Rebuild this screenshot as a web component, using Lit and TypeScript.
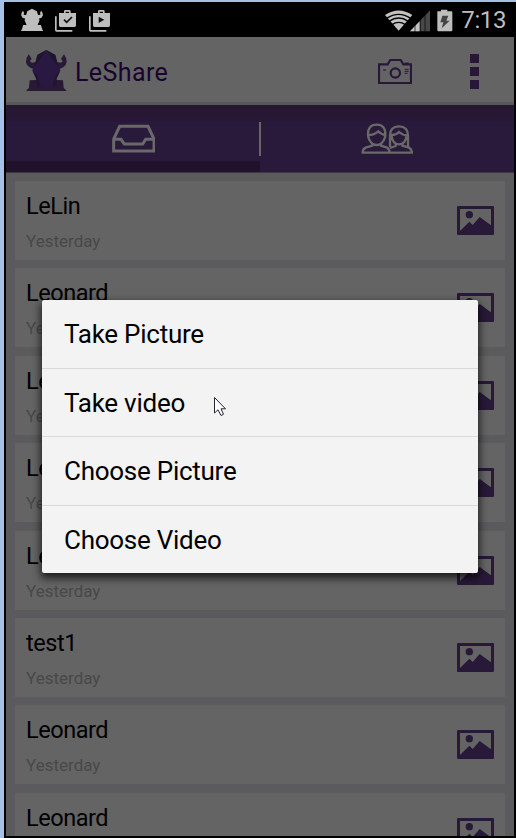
import { LitElement, html, svg, css } from "lit";
import { customElement } from "lit/decorators.js";

const frogSilhouette = svg`<path d="M51 0 L74 12 L79 29 Q91 32 91 25 L88 20 L94 10 Q103 20 102 32 Q98 44 84 46 L86 55 L77 76 L93 76 L98 93 L103 104 L0 104 L5 93 L10 76 L26 76 L17 55 L19 46 Q4 44 1 32 Q0 20 9 10 L15 20 L12 25 Q12 32 24 29 L29 12 Z"/>`;

@customElement("app-root")
export class AppRoot extends LitElement {
  private entries = ["LeLin", "Leonard", "Leonard", "Leonard", "Leonard", "test1", "Leonard", "Leonard"];
  private choices = ["Take Picture", "Take video", "Choose Picture", "Choose Video"];

  static styles = css`
    :host { display: block; width: 516px; height: 838px; overflow: hidden; position: relative; font-family: Roboto, "Noto Sans", sans-serif; background: #000; color: #000; }
    * { box-sizing: border-box; }
    svg { display: block; flex: none; }
    .frame { height: 838px; border-left: 4px solid #a6c1e8; border-top: 2px solid #a6c1e8; padding: 0 2px 2px; background: #000; }
    .screen { height: 834px; overflow: hidden; background: #5b5b5d; }
    .status { height: 35px; background: #000; display: flex; align-items: center; }
    .status .left { margin-left: 14px; }
    .status .right { margin-left: auto; margin-right: 7px; }
    .clock { font-size: 24px; line-height: 35px; color: #bebebe; margin: 2px 8px 0 0; letter-spacing: -0.4px; }
    .status .right { margin-right: 8px; }
    .bar { height: 68px; background: #646464; border-bottom: 3px solid #585858; display: flex; align-items: center; }
    .logo { margin-left: 20px; margin-top: 3px; }
    .app { font-size: 25px; line-height: 30px; color: #19032e; margin: 7px auto 0 8px; letter-spacing: 0.4px; }
    .camera { margin: 3px 58px 0 0; }
    .more { width: 9px; margin: 4px 35px 0 0; display: grid; gap: 4px; }
    .more i { height: 9px; background: #281738; }
    .tabs { height: 68px; background: linear-gradient(#251732 0, #281736 16px, #29193b 17px, #29193b 100%); display: flex; border-bottom: 1px solid #3d3644; }
    .tab { width: 254px; display: flex; justify-content: center; padding-top: 18px; }
    .tab.active { border-bottom: 11px solid #20122b; }
    .rule { width: 2px; height: 34px; margin: 17px -1px 0; background: #666; }
    .list { padding: 8px 9px 0; display: flex; flex-direction: column; gap: 8.4px; }
    .card { height: 79px; flex: none; background: #646464; display: flex; justify-content: space-between; padding: 0 11px; }
    .name { font-size: 23.5px; line-height: 28px; margin-top: 11px; letter-spacing: -0.45px; }
    .date { font-size: 17px; line-height: 20px; margin-top: 11px; color: #484848; }
    .pic { margin-top: 25px; }
    .dialog { position: absolute; left: 42px; top: 300px; width: 436px; height: 273px; background: #f3f3f3; border-radius: 2px; box-shadow: 0 4px 9px 1px rgba(0,0,0,.75); }
    .choice { height: 68.5px; padding-left: 22px; font-size: 26px; line-height: 69.2px; letter-spacing: -0.26px; border-bottom: 1px solid #dadada; }
    .choice:last-child { border-bottom: 0; }
    .cursor { position: absolute; left: 213px; top: 396px; }
  `;

  private picture() {
    return html`<svg class="pic" width="37" height="29" viewBox="0 0 111 87" fill="#281938">
      <path fill-rule="evenodd" d="M3 0 H108 Q111 0 111 3 V84 Q111 87 108 87 H3 Q0 87 0 84 V3 Q0 0 3 0 Z M9 9 V75 L37 47 L47 57 L68 33 L102 58 V9 Z"/>
      <circle cx="37" cy="26" r="11"/></svg>`;
  }

  render() {
    return html`
      <div class="frame"><div class="screen">
        <div class="status">
          <svg class="left" width="92" height="24" viewBox="0 0 276 72" fill="#bebebe">
            <g transform="translate(3 2) scale(.645)">${frogSilhouette}</g>
            <g id="bag">
              <path d="M105 25 h5 v41 h47 v5 H110 q-5 0 -5-5Z"/>
              <path fill-rule="evenodd" d="M117 15 H132 V10 Q132 6 137 6 H147 Q152 6 152 10 V15 H168 V52 Q168 57 163 57 H121 Q117 57 117 52 Z M137 11 V15 H147 V11 Z"/>
            </g>
            <path d="M132 35 l8 8 l16-16" fill="none" stroke="#111" stroke-width="5"/>
            <use href="#bag" x="102"/>
            <path d="M236 26 v19 l17-10Z" fill="#111"/>
          </svg>
          <svg class="right" width="68" height="24" viewBox="0 0 204 72">
            <path d="M41 68 L0 21 Q41 -6 82 21 Z" fill="#c2c2c2"/>
            <path d="M5 31 Q41 7 77 31 M12 40 Q41 20 70 40 M21 50 Q41 36 61 50" fill="none" stroke="#000" stroke-width="4"/>
            <path d="M75 70 L135 7 V70Z" fill="#484848"/><path d="M75 70 L104 40 V70Z" fill="#c2c2c2"/>
            <path d="M90 0 V72 M106 0 V72 M120 0 V72" stroke="#000" stroke-width="2"/>
            <path d="M157 10 h11 V5 h19 v5 h12 q3 0 3 3 V67 q0 3-3 3 H160 q-3 0-3-3Z" fill="#bebebe"/>
            <path d="M172 23 h18 l-6 15 h10 L170 61 l5-18 h-9Z" fill="#444"/>
          </svg>
          <span class="clock">7:13</span>
        </div>
        <div class="bar">
          <svg class="logo" width="41" height="42" viewBox="0 0 123 126">
            <g fill="#281936">
              <path d="M8 13 Q0 22 0 37 Q4 53 23 57 L32 50 L32 38 L26 37 Q14 41 12 33 L17 26Z"/>
              <path d="M114 13 Q122 22 122 37 Q118 53 99 57 L90 50 L90 38 L96 37 Q108 41 110 33 L105 26Z"/>
              <path d="M11 91 L31 90 L42 123 H0 L9 113Z M111 91 L91 90 L80 123 H122 L113 113Z"/>
              <path d="M30 86 L61 112 L92 86 L94 123 H29Z"/>
            </g>
            <path d="M61 0 L88 15 L93 36 L103 61 L91 88 L61 119 L31 88 L19 61 L29 36 L34 15Z" fill="#291842"/>
            <path d="M61 0 L34 15 L47 22Z M61 0 L88 15 L75 22Z M103 61 L91 88 L80 99 L91 72Z M19 61 L31 88 L42 99 L31 72Z M30 90 L42 102 L36 113Z M92 90 L80 102 L86 113Z" fill="#211431"/>
            <path d="M34 15 L47 22 L25 50Z M88 15 L75 22 L97 50Z" fill="#21142e"/>
          </svg>
          <span class="app">LeShare</span>
          <svg class="camera" width="34" height="25" viewBox="0 0 102 75" fill="none" stroke="#281738" stroke-width="6.5">
            <path d="M3 72 V16 H29 L37 3 H68 L76 16 H99 V72Z"/><circle cx="52" cy="42" r="14"/>
            <path d="M80 13 h12" stroke-width="5"/><path d="M80 31 h12 M80 37 h12 M80 43 h9" stroke-width="3"/><path d="M16 33 h7" stroke-width="4"/>
          </svg>
          <span class="more"><i></i><i></i><i></i></span>
        </div>
        <div class="tabs">
          <div class="tab active"><svg width="43" height="30" viewBox="0 0 129 90" fill="none" stroke="#696969" stroke-width="9">
            <path d="M5 84 V48 L23 10 H108 L126 48 V84Z M5 49 H27 L37 63 H92 L101 49 H126"/></svg></div>
          <span class="rule"></span>
          <div class="tab"><svg width="52" height="31" viewBox="0 0 156 93" fill="none" stroke="#696969" stroke-width="7">
            <path d="M34 62 Q22 51 21 36 Q20 5 47 5 Q74 5 73 36 Q72 51 60 62 Q47 70 34 62Z M21 36 Q38 37 52 25 Q61 35 73 36"/>
            <path d="M34 62 V68 L14 74 Q5 78 5 89 H153 Q152 78 144 74 L124 68 V62 M60 62 V68 L78 74 Q86 79 86 88"/>
            <path d="M87 73 V38 Q87 10 114 10 Q141 10 141 38 V73 M89 36 Q105 37 114 27 Q125 37 140 37 M92 39 Q94 63 114 64 Q134 63 136 39 M104 64 V69 L87 75" />
          </svg></div>
        </div>
        <div class="list">
          ${this.entries.map((n) => html`<div class="card"><div><div class="name">${n}</div><div class="date">Yesterday</div></div>${this.picture()}</div>`)}
        </div>
      </div></div>
      <div class="dialog">${this.choices.map((c) => html`<div class="choice">${c}</div>`)}</div>
      <svg class="cursor" width="14" height="21" viewBox="0 0 14 21"><path d="M1.5 1.5 V17 L5 13.8 L8 19.5 L10.5 18.3 L8 12.8 H12.5Z" fill="#fff" stroke="#242438" stroke-width="1"/></svg>
    `;
  }
}
